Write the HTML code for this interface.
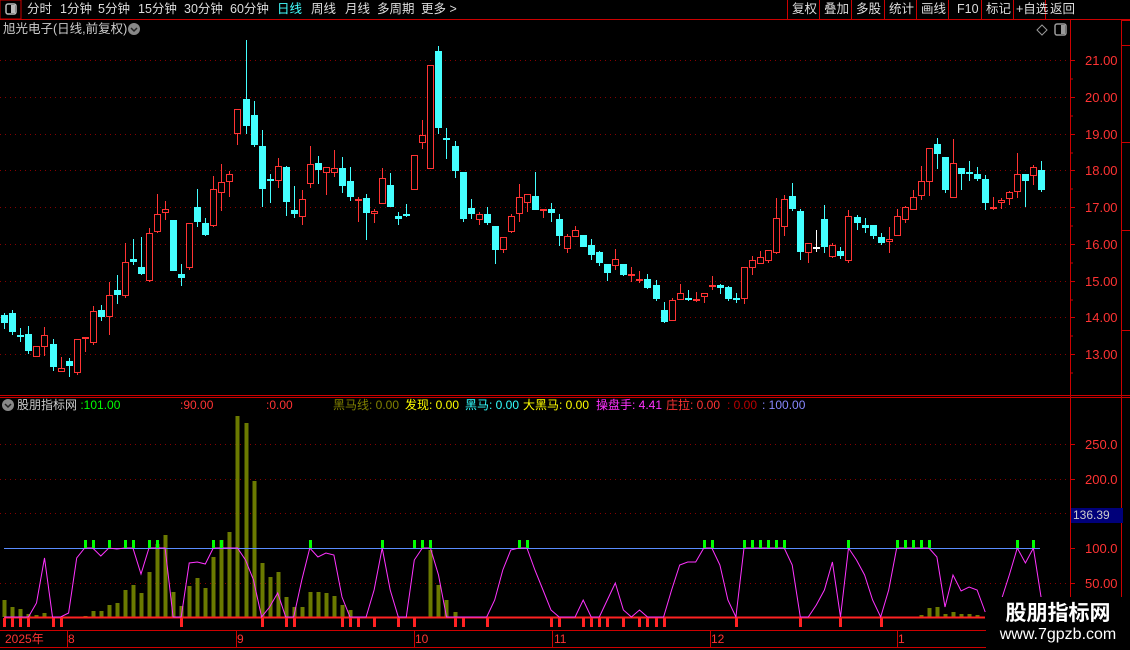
<!DOCTYPE html>
<html><head><meta charset="utf-8">
<style>
*{margin:0;padding:0}
body{width:1130px;height:650px;background:#000;overflow:hidden;position:relative;font-family:"Liberation Sans","Noto Sans CJK SC",sans-serif;font-size:12px;color:#ddd}
.a{position:absolute;white-space:nowrap;line-height:14px}
.t{position:absolute;white-space:nowrap;line-height:14px;top:2px;font-size:12.5px;color:#ddd}
svg{position:absolute;left:0;top:0}
</style></head><body>
<svg id="s" width="1130" height="650" xmlns="http://www.w3.org/2000/svg"></svg>
<div class="t" style="left:27px">分时</div>
<div class="t" style="left:60px">1分钟</div>
<div class="t" style="left:98px">5分钟</div>
<div class="t" style="left:138px">15分钟</div>
<div class="t" style="left:184px">30分钟</div>
<div class="t" style="left:230px">60分钟</div>
<div class="t" style="left:277px;color:#4ff">日线</div>
<div class="t" style="left:311px">周线</div>
<div class="t" style="left:345px">月线</div>
<div class="t" style="left:377px">多周期</div>
<div class="t" style="left:421px">更多 &gt;</div>
<div class="t" style="left:792px">复权</div>
<div class="t" style="left:824px">叠加</div>
<div class="t" style="left:856px">多股</div>
<div class="t" style="left:889px">统计</div>
<div class="t" style="left:921px">画线</div>
<div class="t" style="left:957px">F10</div>
<div class="t" style="left:986px">标记</div>
<div class="t" style="left:1016px">+自选</div>
<div class="t" style="left:1050px">返回</div>
<div class="a" style="left:3px;top:22px;color:#ccc;font-size:12.5px">旭光电子(日线,前复权)</div>
<div class="a" style="left:17px;top:398px;color:#ccc">股朋指标网 <span style="color:#0f0">:101.00</span></div>
<div class="a" style="left:180px;top:398px;color:#f33">:90.00</div>
<div class="a" style="left:266px;top:398px;color:#f33">:0.00</div>
<div class="a" style="left:333px;top:398px;color:#808000">黑马线: 0.00</div>
<div class="a" style="left:405px;top:398px;color:#ff0">发现: 0.00</div>
<div class="a" style="left:465px;top:398px;color:#3ff">黑马: 0.00</div>
<div class="a" style="left:523px;top:398px;color:#ff0">大黑马: 0.00</div>
<div class="a" style="left:596px;top:398px;color:#f3f">操盘手: 4.41</div>
<div class="a" style="left:666px;top:398px;color:#f33">庄拉: 0.00</div>
<div class="a" style="left:727px;top:398px;color:#b00">: 0.00</div>
<div class="a" style="left:762px;top:398px;color:#88f">: 100.00</div>
<div class="a" style="left:5px;top:632px;color:#f33">2025年</div>
<div class="a" style="left:68px;top:632px;color:#f33">8</div>
<div class="a" style="left:237px;top:632px;color:#f33">9</div>
<div class="a" style="left:415px;top:632px;color:#f33">10</div>
<div class="a" style="left:554px;top:632px;color:#f33">11</div>
<div class="a" style="left:711px;top:632px;color:#f33">12</div>
<div class="a" style="left:898px;top:632px;color:#f33">1</div>
<div class="a" style="left:1071px;top:508px;width:50px;height:15px;background:#00007a;color:#ccc;padding-left:2px">136.39</div>
<div style="position:absolute;left:986px;top:597px;width:144px;height:53px;background:#000"></div>
<div class="a" style="left:986px;top:602px;width:144px;text-align:center;color:#fff;font-size:21px;font-weight:bold;line-height:24px">股朋指标网</div>
<div class="a" style="left:986px;top:626px;width:144px;text-align:center;color:#fff;font-size:16px;line-height:18px">www.7gpzb.com</div>
<script>
var C=[[313,329,315,323,'c'],[310,335,313,332,'c'],[328,342,335,337,'c'],[326,354,334,351,'c'],[346,357,346,357,'r'],[327,356,335,347,'r'],[339,371,344,367,'c'],[357,372,368,372,'r'],[358,377,361,366,'c'],[339,375,339,373,'r'],[337,352,337,339,'r'],[306,345,311,343,'r'],[305,321,310,317,'c'],[282,335,295,317,'r'],[275,304,290,295,'c'],[243,298,262,296,'r'],[239,265,259,262,'c'],[237,275,267,274,'c'],[228,282,233,281,'r'],[194,233,214,232,'r'],[201,220,209,213,'r'],[220,271,220,271,'c'],[264,286,274,278,'c'],[223,270,223,268,'r'],[189,227,207,222,'c'],[218,236,223,235,'c'],[176,227,189,226,'r'],[164,211,182,193,'r'],[171,197,174,182,'r'],[109,145,109,134,'r'],[40,134,99,126,'c'],[101,147,115,145,'c'],[130,207,146,189,'c'],[174,203,179,181,'c'],[158,188,166,181,'r'],[166,216,167,202,'c'],[186,218,210,214,'c'],[190,225,199,217,'r'],[146,188,164,184,'r'],[156,184,163,170,'c'],[167,195,167,173,'r'],[150,177,168,173,'r'],[157,193,168,186,'c'],[167,201,181,197,'c'],[197,222,199,201,'r'],[194,240,198,213,'c'],[209,223,211,214,'r'],[168,204,178,204,'r'],[173,207,185,207,'c'],[212,225,216,219,'c'],[204,217,214,216,'c'],[155,190,155,190,'r'],[120,149,135,143,'r'],[65,169,65,169,'r'],[46,134,51,128,'c'],[128,159,138,140,'c'],[141,178,146,171,'c'],[172,222,172,219,'c'],[199,219,208,214,'c'],[212,225,214,220,'r'],[207,225,214,223,'c'],[226,264,226,250,'c'],[237,253,237,250,'r'],[214,233,216,232,'r'],[184,222,197,214,'r'],[194,212,194,203,'r'],[172,210,196,210,'c'],[209,218,209,211,'r'],[203,222,209,213,'c'],[214,246,219,236,'c'],[234,253,236,249,'r'],[226,237,230,237,'r'],[235,247,235,247,'c'],[239,260,245,255,'c'],[251,266,252,263,'c'],[264,281,264,273,'c'],[249,270,259,266,'r'],[264,276,264,275,'c'],[267,282,274,276,'r'],[271,283,279,281,'r'],[274,289,279,288,'c'],[280,301,285,299,'c'],[302,323,310,322,'c'],[298,321,300,321,'r'],[284,300,293,300,'r'],[290,301,298,299,'c'],[292,302,299,300,'r'],[293,303,293,297,'r'],[276,290,285,287,'r'],[284,294,285,288,'c'],[286,301,287,299,'c'],[293,303,298,299,'c'],[267,304,267,299,'r'],[256,275,260,268,'r'],[251,264,257,264,'r'],[250,263,250,261,'r'],[198,254,218,253,'r'],[195,236,199,227,'r'],[183,211,196,209,'c'],[209,260,211,252,'c'],[243,263,243,253,'r'],[230,252,247,248,'w'],[205,253,219,247,'c'],[243,258,245,257,'r'],[247,259,251,256,'c'],[210,263,216,261,'r'],[215,230,217,223,'c'],[218,233,225,228,'c'],[225,239,225,236,'c'],[233,245,237,243,'c'],[227,253,239,242,'r'],[209,236,216,236,'r'],[206,223,207,220,'r'],[190,210,197,210,'r'],[166,200,181,196,'r'],[148,196,148,182,'r'],[138,169,144,154,'c'],[157,193,157,190,'c'],[139,198,163,198,'r'],[168,190,168,174,'c'],[161,181,172,174,'c'],[167,181,174,179,'c'],[175,210,179,203,'c'],[197,210,207,209,'r'],[198,209,200,203,'r'],[191,205,192,199,'r'],[153,198,174,192,'r'],[174,207,174,181,'c'],[165,185,167,176,'r'],[161,192,170,190,'c']];
var X=function(i){return 4.3+8.04*i};
var s='';
var P=[60,97,134,170,207,244,281,317,354];
P.forEach(function(y){s+='<line x1="0" y1="'+(y+.5)+'" x2="1068" y2="'+(y+.5)+'" stroke="#800" stroke-dasharray="1 4"/>'});
[444,479,513,583].forEach(function(y){s+='<line x1="0" y1="'+(y+.5)+'" x2="1068" y2="'+(y+.5)+'" stroke="#800" stroke-dasharray="1 4"/>'});
s+='<rect x="0" y="0" width="21" height="19" fill="none" stroke="#c00"/><rect x="6" y="4" width="10" height="10" rx="2" fill="none" stroke="#bbb" stroke-width="1.5"/><rect x="11" y="5" width="4" height="8" fill="#bbb"/>';
s+='<line x1="0" y1="19.5" x2="1130" y2="19.5" stroke="#c00"/>';
[787,819,851,884,916,948,981,1013,1045].forEach(function(x){s+='<line x1="'+(x+.5)+'" y1="0" x2="'+(x+.5)+'" y2="19" stroke="#c00"/>'});
s+='<line x1="1070.5" y1="20" x2="1070.5" y2="650" stroke="#c00"/><line x1="1121.5" y1="20" x2="1121.5" y2="650" stroke="#c00"/>';
s+='<line x1="0" y1="395.5" x2="1130" y2="395.5" stroke="#c00"/><line x1="0" y1="397.5" x2="1130" y2="397.5" stroke="#c00"/>';
s+='<line x1="0" y1="630.5" x2="1070" y2="630.5" stroke="#c00"/><line x1="0" y1="647.5" x2="1070" y2="647.5" stroke="#c00"/>';
[67,236,414,552,710,897].forEach(function(x){s+='<line x1="'+(x+.5)+'" y1="630" x2="'+(x+.5)+'" y2="647" stroke="#c00"/>'});
[20,45,142,230,330,395].forEach(function(y){s+='<line x1="1121" y1="'+(y+.5)+'" x2="1130" y2="'+(y+.5)+'" stroke="#c00"/>'});
s+='<circle cx="134" cy="29" r="6" fill="#888"/><path d="M131 28l3 3 3-3" stroke="#222" stroke-width="1.5" fill="none"/>';
s+='<circle cx="8" cy="405" r="6" fill="#888"/><path d="M5 404l3 3 3-3" stroke="#222" stroke-width="1.5" fill="none"/>';
s+='<path d="M1042 25l5 5-5 5-5-5z" fill="none" stroke="#999"/><rect x="1055" y="24" width="11" height="11" rx="2" fill="none" stroke="#999" stroke-width="1.5"/><rect x="1061" y="25" width="4" height="9" fill="#999"/>';
var L=['21.00','20.00','19.00','18.00','17.00','16.00','15.00','14.00','13.00'];
P.forEach(function(y,i){s+='<line x1="1070" y1="'+(y+.5)+'" x2="1075" y2="'+(y+.5)+'" stroke="#c00"/><line x1="1070" y1="'+(y+19)+'" x2="1073" y2="'+(y+19)+'" stroke="#c00"/><text x="1085" y="'+(y+5)+'" fill="#f33" font-size="13">'+L[i]+'</text>'});
[[444,'250.0'],[479,'200.0'],[513,'150.0'],[548,'100.0'],[583,'50.00']].forEach(function(a){s+='<line x1="1070" y1="'+(a[0]+.5)+'" x2="1075" y2="'+(a[0]+.5)+'" stroke="#c00"/><text x="1085" y="'+(a[0]+5)+'" fill="#f33" font-size="13">'+a[1]+'</text>'});
C.forEach(function(c,i){var x=Math.round(X(i));var col=c[4]=='r'?'#f33':(c[4]=='w'?'#fff':'#4ff');
 var bt=c[2],bb=c[3];
 s+='<line x1="'+(x+.5)+'" y1="'+c[0]+'" x2="'+(x+.5)+'" y2="'+c[1]+'" stroke="'+col+'"/>';
 if(bb-bt<2){s+='<rect x="'+(x-3)+'" y="'+bt+'" width="7" height="2" fill="'+col+'"/>';}
 else if(c[4]=='r'){s+='<rect x="'+(x-2.5)+'" y="'+(bt+.5)+'" width="6" height="'+(bb-bt-1)+'" fill="#000" stroke="'+col+'"/>';}
 else s+='<rect x="'+(x-3)+'" y="'+bt+'" width="7" height="'+(bb-bt)+'" fill="'+col+'"/>';
});
var B={0:600,1:607,2:609,3:614,4:615,5:613,10:616,11:611,12:611,13:605,14:603,15:590,16:585,17:593,18:572,19:544,20:535,21:592,22:606,23:586,24:578,25:588,26:557,27:540,28:532,29:416,30:423,31:481,32:563,33:577,34:572,35:597,36:607,37:607,38:592,39:592,40:593,41:596,42:605,43:610,53:550,54:585,55:600,56:612,114:615,115:608,116:607,117:614,118:612,119:614,120:614,121:615};
for(var k in B){var x=Math.round(X(+k));s+='<rect x="'+(x-1.5)+'" y="'+B[k]+'" width="4" height="'+(617-B[k])+'" fill="#6b7a00"/>';}
s+='<line x1="4" y1="548.5" x2="1040" y2="548.5" stroke="#5a8cff"/>';
s+='<line x1="4" y1="617.5" x2="985" y2="617.5" stroke="#f22" stroke-width="2"/>';
var M=[617,617,617,617,603,558,617,617,613,558,548,548,556,548,549,548,548,574,548,548,548,617,617,563,562,564,548,548,548,548,560,580,617,607,593,617,617,580,548,557,553,555,597,617,617,617,590,548,590,617,617,560,548,548,575,617,617,617,617,617,617,600,570,550,548,548,570,590,610,617,617,617,600,617,617,600,583,610,617,610,617,617,617,590,565,562,562,548,548,565,600,617,548,548,548,548,548,548,565,617,617,605,590,562,617,548,560,575,600,617,590,548,548,548,548,548,557,607,575,591,587,590,612,null,600,575,548,563,548,600];
var d='',st=false;M.forEach(function(y,i){if(y==null){st=false;return}d+=(st?'L':'M')+X(i).toFixed(1)+' '+y;st=true});
s+='<path d="'+d+'" fill="none" stroke="#f3f" stroke-width="1"/>';
[10,11,13,15,16,18,19,26,27,38,47,51,52,53,64,65,87,88,92,93,94,95,96,97,105,111,112,113,114,115,126,128].forEach(function(i){var x=Math.round(X(i));s+='<rect x="'+(x-1)+'" y="540" width="3" height="8" fill="#0f0"/>'});
[0,1,2,3,6,7,22,32,35,36,42,43,44,46,49,51,56,57,60,68,69,72,73,74,75,77,79,80,81,82,91,99,104,109].forEach(function(i){var x=Math.round(X(i));s+='<rect x="'+(x-1)+'" y="618" width="3" height="9" fill="#f22"/>'});
document.getElementById('s').innerHTML=s;
</script>
</body></html>
